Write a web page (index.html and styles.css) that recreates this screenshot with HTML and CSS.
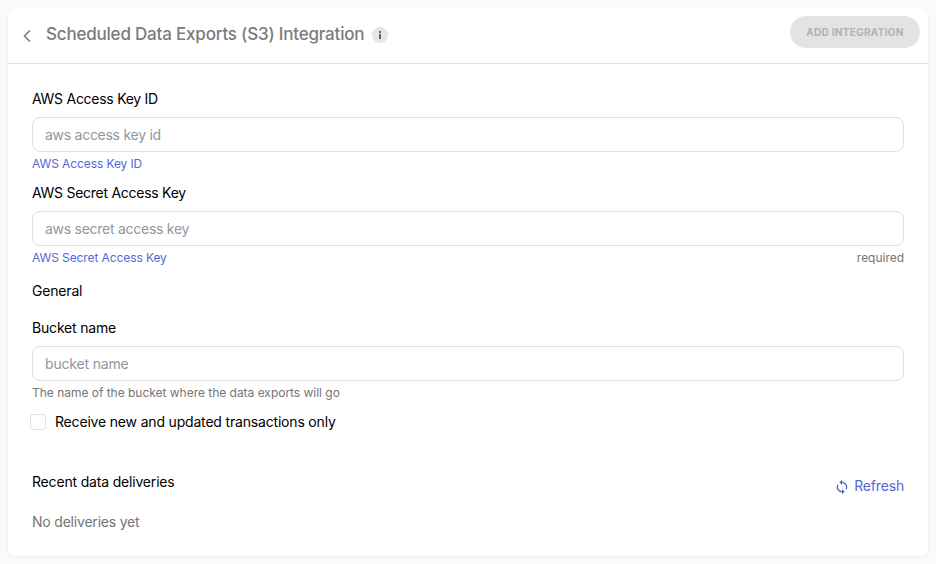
FILE: index.html
```html
<!DOCTYPE html>
<html lang="en">
<head>
<meta charset="utf-8">
<title>Scheduled Data Exports (S3) Integration</title>
<link rel="stylesheet" href="styles.css">
</head>
<body>
<main class="card">
  <header class="header">
    <svg class="back" viewBox="0 0 8 12" aria-hidden="true"><path d="M6.9 .6 1.4 6l5.5 5.4"/></svg>
    <h1 class="title">Scheduled Data Exports (S3) Integration</h1>
    <svg class="info" viewBox="0 0 16 16" aria-hidden="true"><circle cx="8" cy="8" r="8"/><path d="M7 4h2v2H7zM7 7h2v5H7z"/></svg>
    <button class="add" disabled>ADD INTEGRATION</button>
  </header>
  <div class="content">
    <section class="field aws">
      <label class="label" for="key">AWS Access Key ID</label>
      <input class="input" id="key" placeholder="aws access key id">
      <div class="help"><a class="link">AWS Access Key ID</a></div>
    </section>
    <section class="field aws">
      <label class="label" for="secret">AWS Secret Access Key</label>
      <input class="input" id="secret" placeholder="aws secret access key">
      <div class="help"><a class="link">AWS Secret Access Key</a><span>required</span></div>
    </section>
    <h2 class="general">General</h2>
    <section class="field">
      <label class="label" for="bucket">Bucket name</label>
      <input class="input" id="bucket" placeholder="bucket name">
      <div class="help"><span>The name of the bucket where the data exports will go</span></div>
    </section>
    <label class="check"><input type="checkbox" class="box"><span>Receive new and updated transactions only</span></label>
    <section class="recent">
      <h2 class="label">Recent data deliveries</h2>
      <a class="refresh"><svg viewBox="0 0 24 24" aria-hidden="true"><path d="M12 4V1L8 5l4 4V6c3.31 0 6 2.69 6 6 0 1.01-.25 1.97-.7 2.8l1.46 1.46C19.54 15.03 20 13.57 20 12c0-4.42-3.58-8-8-8zm0 14c-3.31 0-6-2.69-6-6 0-1.01.25-1.97.7-2.8L5.24 7.74C4.46 8.97 4 10.43 4 12c0 4.42 3.58 8 8 8v3l4-4-4-4v3z"/></svg><span>Refresh</span></a>
    </section>
    <p class="empty">No deliveries yet</p>
  </div>
</main>
</body>
</html>
```
FILE: styles.css
```css
* { box-sizing: border-box; }
body {
  margin: 0;
  padding: 8px;
  height: 564px;
  background: #fafafa;
  color: #000;
  font: 400 14px/20px Inter, "Liberation Sans", sans-serif;
  letter-spacing: -.18px;
}
h1, h2, p { margin: 0; font-size: inherit; font-weight: 400; }
.card {
  height: 548px;
  background: #fff;
  border-radius: 8px;
  box-shadow: 0 1px 4px rgba(0, 0, 0, .06);
}
.header {
  display: flex;
  align-items: center;
  height: 56px;
  padding: 0 8px 2px 15px;
  border-bottom: 1px solid #e0e0e0;
}
.back {
  width: 8px;
  height: 12px;
  margin-top: 2px;
  fill: none;
  stroke: #757575;
  stroke-width: 1.4;
}
.title {
  width: 318px;
  margin: -1px 0 0 15px;
  color: #7b7b7b;
  font-size: 17px;
  font-weight: 500;
  letter-spacing: -.2px;
  white-space: nowrap;
}
.info { width: 16px; height: 16px; margin-left: 8px; fill: #616161; }
.info circle { fill: #e6e6e6; }
.add {
  width: 130px;
  height: 32px;
  margin: -5px 0 0 auto;
  padding: 0;
  border: 0;
  border-radius: 16px;
  background: #e3e3e3;
  color: #b2b2b2;
  font: 700 10px/16px Inter, sans-serif;
  letter-spacing: .3px;
  white-space: nowrap;
}
.content { padding: 25px 24px 24px; }
.field { margin-bottom: 11px; }
.label { display: block; }
.input {
  display: block;
  width: 100%;
  height: 35px;
  margin-top: 8px;
  padding: 0 12px;
  border: 1px solid #e0e0e0;
  border-radius: 8px;
  background: #fff;
  font: inherit;
  letter-spacing: inherit;
}
.aws { letter-spacing: -.27px; }
.input::placeholder { color: #8e979f; opacity: 1; }
.help {
  display: flex;
  justify-content: space-between;
  margin-top: 4px;
  color: #757575;
  font-size: 12px;
  line-height: 16px;
  letter-spacing: -.02px;
}
.help .link { letter-spacing: -.1px; }
.link, .refresh { color: #5468d4; }
.general { margin: 15px 0 17px; }
.check {
  display: flex;
  align-items: center;
  gap: 9px;
  margin: 11px 0 0 -2px;
}
.box {
  appearance: none;
  width: 16px;
  height: 16px;
  margin: 0;
  border: 1px solid #e0e0e0;
  border-radius: 3px;
}
.recent {
  display: flex;
  justify-content: space-between;
  margin-top: 40px;
}
.refresh { display: flex; align-items: center; gap: 4px; margin-top: 4px; height: 20px; }
.refresh svg { width: 16px; height: 16px; margin-top: 2px; fill: currentColor; }
.empty { margin-top: 16px; color: #757575; letter-spacing: -.2px; }
```
